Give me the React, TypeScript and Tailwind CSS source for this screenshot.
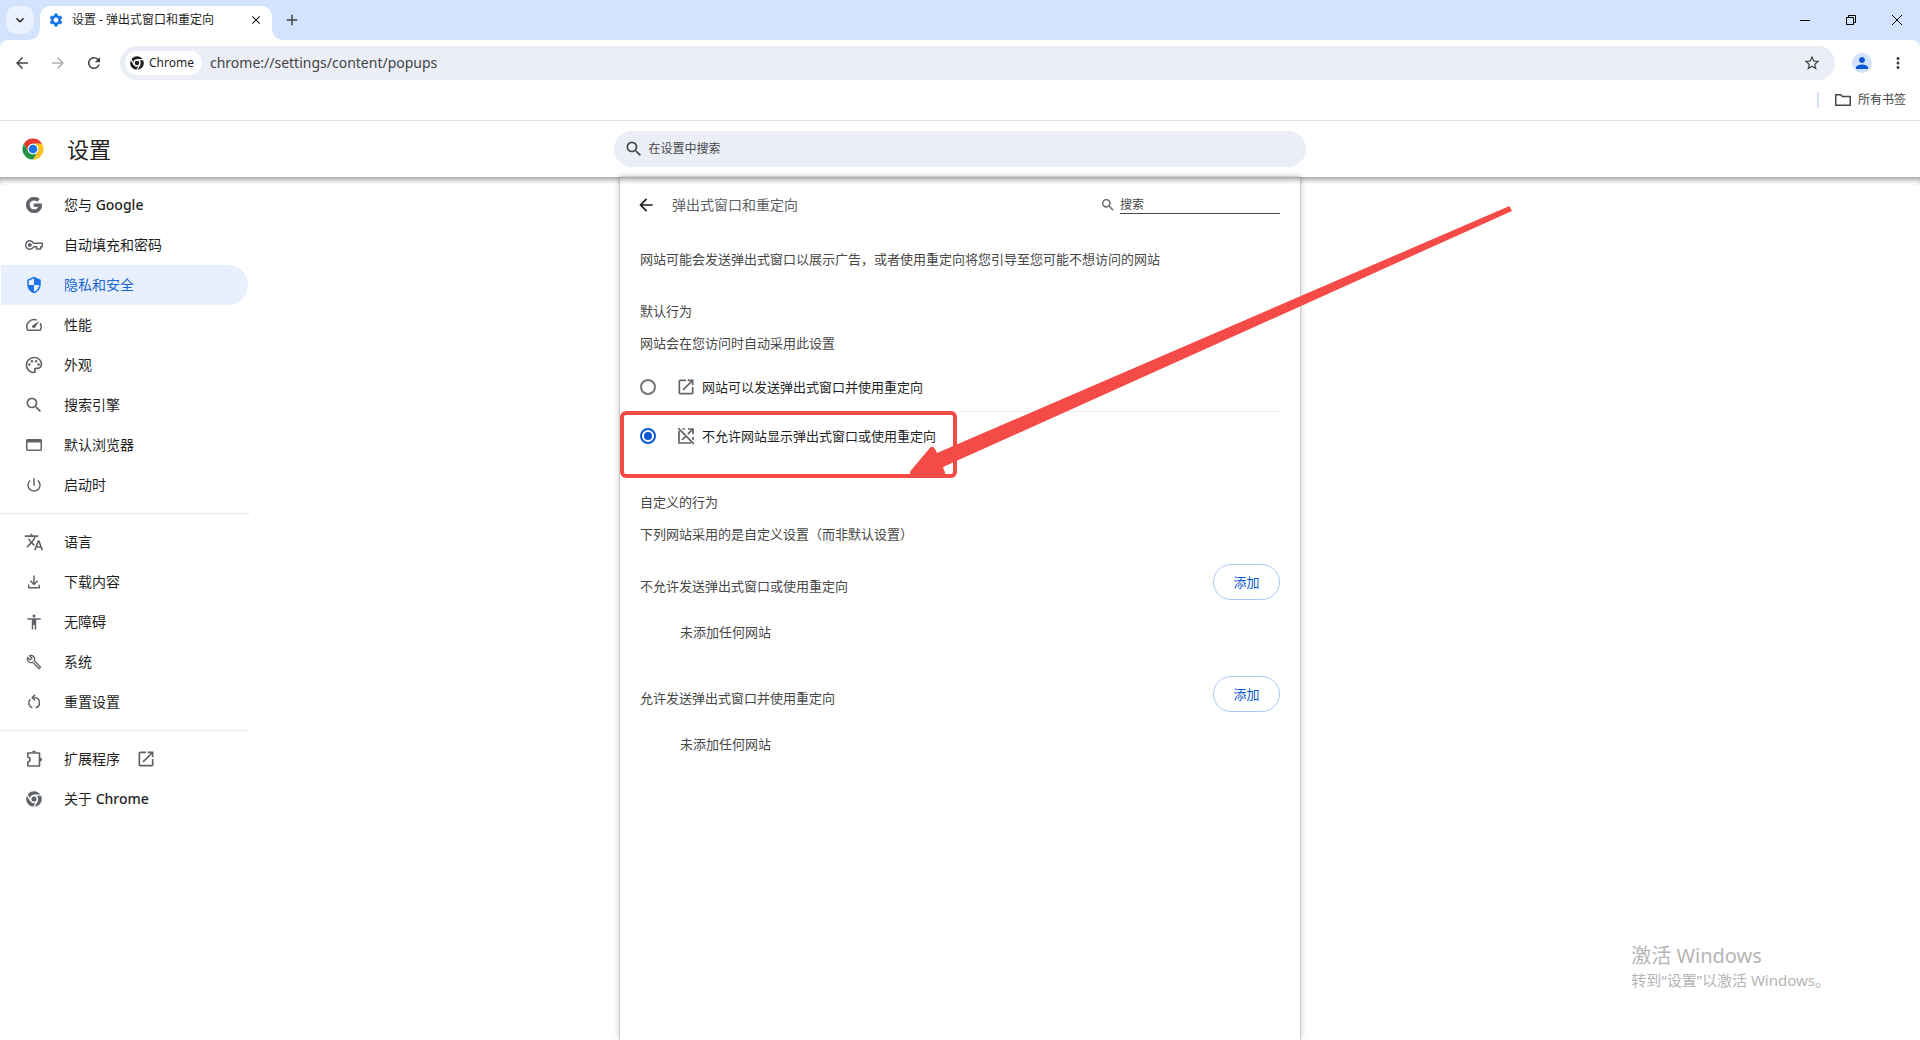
import React from 'react';
import { FaGoogle } from 'react-icons/fa';
import {
  MdAccessibility,
  MdAdd,
  MdArrowBack,
  MdArrowForward,
  MdClose,
  MdKeyboardArrowDown,
  MdMoreVert,
  MdOpenInNew,
  MdOutlineBuild,
  MdOutlinePalette,
  MdPerson,
  MdPowerSettingsNew,
  MdRefresh,
  MdSearch,
  MdSecurity,
  MdSettings,
  MdStarBorder,
  MdTranslate,
} from 'react-icons/md';

type IconProps = { className?: string };

const GoogleIcon = ({ className }: IconProps) => <FaGoogle className={`stroke-current stroke-[28] ${className}`} />;

const KeyIcon = ({ className }: IconProps) => (
  <svg viewBox="0 0 20 20" fill="none" stroke="currentColor" strokeWidth="1.5" className={className}>
    <path d="M9.6 8.200A4.200 4.200 0 1 0 9.600 11.800H12.500v2.200h4.200v-2.200h1.600V8.200Z" strokeLinejoin="round" />
    <circle cx="5.800" cy="10" r="2" fill="currentColor" stroke="none" />
  </svg>
);

const SpeedIcon = ({ className }: IconProps) => (
  <svg viewBox="0 0 20 20" fill="none" stroke="currentColor" strokeWidth="1.5" className={className}>
    <path d="M12.800 5.100A7.200 7.200 0 0 0 3.700 15.200H16.300A7.200 7.200 0 0 0 16.200 8.200" strokeLinejoin="round" />
    <path d="M15.400 6.100 11.200 12.200A1.600 1.600 0 1 1 9 10.100Z" fill="currentColor" stroke="none" />
  </svg>
);

const BrowserIcon = ({ className }: IconProps) => (
  <svg viewBox="0 0 20 20" fill="none" stroke="currentColor" strokeWidth="1.5" className={className}>
    <rect x="2.750" y="4.750" width="14.500" height="10.500" rx="1" />
    <path d="M2.500 6H17.500" strokeWidth="3" />
  </svg>
);

const DownloadIcon = ({ className }: IconProps) => (
  <svg viewBox="0 0 20 20" fill="none" stroke="currentColor" strokeWidth="1.500" className={className}>
    <path d="M10 3.500V12.500M6.300 8.800 10 12.500 13.700 8.800M4.750 12.800V15.750H15.250V12.800" />
  </svg>
);

const ResetIcon = ({ className }: IconProps) => (
  <svg viewBox="0 0 20 20" fill="none" stroke="currentColor" strokeWidth="1.500" className={className}>
    <path d="M9.300 5.600H10.500A5.200 5.200 0 0 1 11.600 15.800M8.400 15.800A5.200 5.200 0 0 1 6.200 7.200" />
    <path d="M11 2.800 8.200 5.600 11 8.400" />
  </svg>
);

const ExtensionIcon = ({ className }: IconProps) => (
  <svg viewBox="0 0 20 20" fill="none" stroke="currentColor" strokeWidth="1.600" className={className}>
    <path d="M3.800 4h11.700v13H3.800v-4c3-.6 3-4.400 0-5Z" strokeLinejoin="round" />
    <path d="M8 3.400a2 2 0 0 1 4 0ZM16 8.500a2 2 0 0 1 0 4Z" fill="currentColor" stroke="none" />
  </svg>
);

const PopupBlockedIcon = ({ className }: IconProps) => (
  <svg viewBox="0 0 20 20" fill="none" stroke="currentColor" strokeWidth="1.700" className={className}>
    <path d="M2.200 2.200 17.800 17.800" />
    <path d="M3 5v12h12M6.500 3H9M12 3h5v5M17 3 11.800 8.200M9.300 10.700 6 14M17 11v3" />
  </svg>
);

const FolderIcon = ({ className }: IconProps) => (
  <svg viewBox="0 0 18 18" fill="none" stroke="currentColor" strokeWidth="1.500" className={className}>
    <path d="M1.750 3.750h5l1.750 1.750h7.750v8.750H1.750Z" strokeLinejoin="round" />
  </svg>
);

const ChromeMono = ({ className }: IconProps) => (
  <svg viewBox="0 0 48 48" fill="none" className={className}>
    <circle cx="24" cy="24" r="17" stroke="currentColor" strokeWidth="13" />
    <circle cx="24" cy="24" r="8" fill="currentColor" />
    <path d="M24 12.500H46M14.040 29.750 3 10.700M33.960 29.750 23 48.700" stroke="#fff" strokeWidth="4" />
    <circle cx="24" cy="24" r="10.500" stroke="#fff" strokeWidth="4" />
  </svg>
);

const ChromeLogo = ({ className }: IconProps) => (
  <svg viewBox="0 0 48 48" className={className}>
    <circle cx="24" cy="24" r="23" fill="#fff" />
    <path d="M24 12.500H43.920A23 23 0 0 0 4.080 12.500L14.040 29.750A11.500 11.500 0 0 1 24 12.500Z" fill="#e33b2e" />
    <path d="M33.960 29.750 24 47A23 23 0 0 0 43.920 12.500H24A11.500 11.500 0 0 1 33.960 29.750Z" fill="#fcc31e" />
    <path d="M14.040 29.750 4.080 12.500A23 23 0 0 0 24 47L33.960 29.750A11.500 11.500 0 0 1 14.040 29.750Z" fill="#229342" />
    <circle cx="24" cy="24" r="11.500" fill="#fff" />
    <circle cx="24" cy="24" r="9.500" fill="#1a73e8" />
  </svg>
);

const menuGroups = [
  [
    { label: '您与', latin: 'Google', Icon: GoogleIcon, size: 'size-4' },
    { label: '自动填充和密码', Icon: KeyIcon, size: 'size-5' },
    { label: '隐私和安全', Icon: MdSecurity, size: 'size-[18px]', active: true },
    { label: '性能', Icon: SpeedIcon, size: 'size-5' },
    { label: '外观', Icon: MdOutlinePalette, size: 'size-5' },
    { label: '搜索引擎', Icon: MdSearch, size: 'size-5' },
    { label: '默认浏览器', Icon: BrowserIcon, size: 'size-5' },
    { label: '启动时', Icon: MdPowerSettingsNew, size: 'size-[18px]' },
  ],
  [
    { label: '语言', Icon: MdTranslate, size: 'size-5' },
    { label: '下载内容', Icon: DownloadIcon, size: 'size-5' },
    { label: '无障碍', Icon: MdAccessibility, size: 'size-[18px]' },
    { label: '系统', Icon: MdOutlineBuild, size: 'size-4' },
    { label: '重置设置', Icon: ResetIcon, size: 'size-5' },
  ],
  [
    { label: '扩展程序', Icon: ExtensionIcon, size: 'size-5', external: true },
    { label: '关于', latin: 'Chrome', Icon: ChromeMono, size: 'size-4' },
  ],
];

const siteLists = ['不允许发送弹出式窗口或使用重定向', '允许发送弹出式窗口并使用重定向'];

const TabStrip = () => (
  <div className="flex h-10 items-start">
    <button aria-label="搜索标签页" className="m-1.5 flex size-7 items-center justify-center rounded-[10px] bg-[#e9f0fe]">
      <MdKeyboardArrowDown className="size-4" />
    </button>
    <div className="relative mt-1.5 flex h-[34px] w-[232px] items-center rounded-t-[10px] bg-white pr-2 pb-1.5 pl-2">
      <span className="absolute bottom-0 -left-2.5 size-2.5 bg-[radial-gradient(circle_at_0_0,#d3e3fd_9px,#fff_10px)]" />
      <span className="absolute -right-2.5 bottom-0 size-2.5 bg-[radial-gradient(circle_at_100%_0,#d3e3fd_9px,#fff_10px)]" />
      <MdSettings className="size-4 text-[#1a73e8]" />
      <span className="ml-2 flex-1 text-xs">设置 - 弹出式窗口和重定向</span>
      <button aria-label="关闭标签页" className="flex size-4 items-center justify-center">
        <MdClose className="size-3.5" />
      </button>
    </div>
    <button aria-label="新标签页" className="ml-1.5 flex size-7 items-center justify-center self-center text-[#444]">
      <MdAdd className="size-[18px]" />
    </button>
    <div className="ml-auto flex h-full text-black">
      <button aria-label="最小化" className="flex w-[46px] items-center justify-center">
        <svg viewBox="0 0 10 10" className="size-2.5" stroke="currentColor">
          <path d="M0 5.500h10" />
        </svg>
      </button>
      <button aria-label="还原" className="flex w-[46px] items-center justify-center">
        <svg viewBox="0 0 10 10" className="size-2.5" fill="none" stroke="currentColor">
          <path d="M.5 2.500h7v7h-7ZM2.500 2.500v-2h7v7h-2" />
        </svg>
      </button>
      <button aria-label="关闭" className="flex w-[46px] items-center justify-center">
        <svg viewBox="0 0 10 10" className="size-2.5" stroke="currentColor">
          <path d="M0 0 10 10M10 0 0 10" />
        </svg>
      </button>
    </div>
  </div>
);

const Toolbar = () => (
  <div className="rounded-t-lg border-b border-[#dfe1e2] bg-white text-[#444]">
    <div className="flex items-center gap-0.5 px-[5px] pt-1.5">
      <button aria-label="后退" className="flex size-[34px] items-center justify-center">
        <MdArrowBack className="size-[18px]" />
      </button>
      <button aria-label="前进" className="flex size-[34px] items-center justify-center text-[#b0b0b0]">
        <MdArrowForward className="size-[18px]" />
      </button>
      <button aria-label="重新加载" className="flex size-[34px] items-center justify-center">
        <MdRefresh className="size-[18px]" />
      </button>
      <div className="ml-[7px] flex h-[34px] flex-1 items-center rounded-full bg-[#ebeef7] pr-3.5 pl-[5px]">
        <button className="flex h-6 items-center gap-[5px] rounded-full bg-white pr-2 pl-[5px] text-xs text-[#1f1f1f]">
          <ChromeMono className="size-3.5" />
          Chrome
        </button>
        <input
          aria-label="地址和搜索栏"
          defaultValue="chrome://settings/content/popups"
          className="ml-2 flex-1 bg-transparent text-sm outline-none"
        />
        <button aria-label="为此标签页添加书签">
          <MdStarBorder className="size-[18px]" />
        </button>
      </div>
      <button aria-label="个人资料" className="ml-2 flex size-[34px] items-center justify-center">
        <span className="flex size-5 items-center justify-center rounded-full bg-[#d3e3fd] text-[#0b57d0]">
          <MdPerson className="size-[18px]" />
        </span>
      </button>
      <button aria-label="菜单" className="flex size-[34px] items-center justify-center">
        <MdMoreVert className="size-[18px]" />
      </button>
    </div>
    <div className="flex h-10 items-center justify-end pr-3.5">
      <span className="h-4 w-0.5 bg-[#d3e3fd]" />
      <button className="ml-[15px] flex items-center gap-1.5 text-xs">
        <FolderIcon className="size-[18px]" />
        所有书签
      </button>
    </div>
  </div>
);

const Header = () => (
  <header className="relative grid h-14 grid-cols-[1fr_36%_1fr] items-center bg-white">
    <div className="flex items-center pl-[22px]">
      <ChromeLogo className="size-[22px]" />
      <h1 className="ml-[23px] text-[22px] leading-7">设置</h1>
    </div>
    <label className="flex h-9 items-center gap-1 rounded-full bg-[#ebeef7] px-2.5">
      <MdSearch className="size-5 text-[#444]" />
      <input
        placeholder="在设置中搜索"
        aria-label="在设置中搜索"
        className="flex-1 bg-transparent text-xs outline-none placeholder:text-[#474747]"
      />
    </label>
    <div className="pointer-events-none absolute inset-x-0 top-full z-10 h-2 shadow-[inset_0_5px_6px_-3px_rgba(0,0,0,0.45)]" />
  </header>
);

const Sidebar = () => (
  <nav className="w-[250px] pt-2">
    {menuGroups.map((group, index) => (
      <ul key={index} className={index > 0 ? 'mt-2 border-t border-[#e8eaed] pt-2' : ''}>
        {group.map(({ label, latin, Icon, size, active, external }: any) => (
          <li key={label}>
            <a
              href="#"
              className={`mr-0.5 ml-px flex h-10 items-center rounded-r-full pl-[23px] text-sm ${
                active ? 'bg-[#e8f0fe] text-[#1967d2]' : ''
              }`}
            >
              <span className={`flex size-5 items-center justify-center ${active ? 'text-[#1a73e8]' : 'text-[#5f6368]'}`}>
                <Icon className={size} />
              </span>
              <span className="ml-5">
                {label}
                {latin && <span className="font-medium"> {latin}</span>}
              </span>
              {external && <MdOpenInNew className="ml-4 size-5 text-[#5f6368]" />}
            </a>
          </li>
        ))}
      </ul>
    ))}
  </nav>
);

const DefaultBehavior = () => (
  <div role="radiogroup" aria-label="默认行为" className="mt-2.5 text-[#1f1f1f]">
    <label className="flex h-12 items-center">
      <input type="radio" name="popups" className="size-4 appearance-none rounded-full border-2 border-[#757575]" />
      <MdOpenInNew className="ml-5 size-5 text-[#5f6368]" />
      <span className="ml-1.5">网站可以发送弹出式窗口并使用重定向</span>
    </label>
    <label className="relative flex h-[49px] items-center border-t border-[#ebebeb]">
      <input
        type="radio"
        name="popups"
        defaultChecked
        className="size-4 appearance-none rounded-full border-2 border-[#0b57d0] bg-[#0b57d0] bg-clip-content p-0.5"
      />
      <PopupBlockedIcon className="ml-5 size-5 text-[#5f6368]" />
      <span className="ml-1.5">不允许网站显示弹出式窗口或使用重定向</span>
      <span className="pointer-events-none absolute -top-px -left-5 h-[67px] w-[337px] rounded-md border-4 border-[#f54b47]" />
    </label>
  </div>
);

const PopupSettings = () => (
  <main className="relative bg-white px-5 text-[13px] leading-5 text-[#474747] shadow-[0_0_1px_rgba(0,0,0,0.4),0_0_6px_rgba(0,0,0,0.3)]">
    <div className="flex h-14 items-center">
      <button aria-label="返回" className="text-[#1f1f1f]">
        <MdArrowBack className="-ml-1 size-5" />
      </button>
      <h2 className="ml-4 flex-1 text-sm text-[#5f6368]">弹出式窗口和重定向</h2>
      <label className="flex items-center gap-1 text-xs">
        <MdSearch className="size-4 text-[#5f6368]" />
        <input
          placeholder="搜索"
          aria-label="搜索"
          className="w-40 border-b border-[#474747] bg-transparent outline-none placeholder:text-[#474747]"
        />
      </label>
    </div>
    <p className="mt-4">网站可能会发送弹出式窗口以展示广告，或者使用重定向将您引导至您可能不想访问的网站</p>

    <h3 className="mt-8">默认行为</h3>
    <p className="mt-3">网站会在您访问时自动采用此设置</p>
    <DefaultBehavior />

    <h3 className="mt-8">自定义的行为</h3>
    <p className="mt-3">下列网站采用的是自定义设置（而非默认设置）</p>
    <div className="mt-5 flex flex-col gap-[34px]">
      {siteLists.map((title) => (
        <section key={title}>
          <div className="flex items-end justify-between">
            <h3 className="pb-1">{title}</h3>
            <button className="h-9 w-[67px] rounded-full border border-[#a8c7fa] text-[#0b57d0]">添加</button>
          </div>
          <p className="mt-[22px] pl-10">未添加任何网站</p>
        </section>
      ))}
    </div>

    {/* arrow pointing at the blocked option */}
    <svg
      viewBox="0 0 603 272"
      className="pointer-events-none absolute top-[27px] left-[290px] z-20 h-[272px] w-[603px]"
      fill="#f54b47"
    >
      <path d="M599.500 2 602 7 33 263 35.500 270 34 272H2Q-1 271 .5 267L19 245Q22 240.500 25 245L27 249Z" />
    </svg>
  </main>
);

const App: React.FC = () => {
  return (
    <div className="relative flex min-h-screen flex-col bg-[#d3e3fd] font-['Noto_Sans','Noto_Sans_CJK_SC',sans-serif] text-[#1f1f1f]">
      <TabStrip />
      <Toolbar />
      <Header />
      <div className="grid flex-1 grid-cols-[minmax(250px,1fr)_minmax(0,680px)_minmax(0,1fr)] bg-white">
        <Sidebar />
        <PopupSettings />
      </div>
      <div className="pointer-events-none absolute right-[90px] bottom-[50px] text-[#b5b5b5]">
        <p className="text-xl leading-7">激活 Windows</p>
        <p className="text-[15px] leading-5">转到“设置”以激活 Windows。</p>
      </div>
    </div>
  );
};

export default App;
